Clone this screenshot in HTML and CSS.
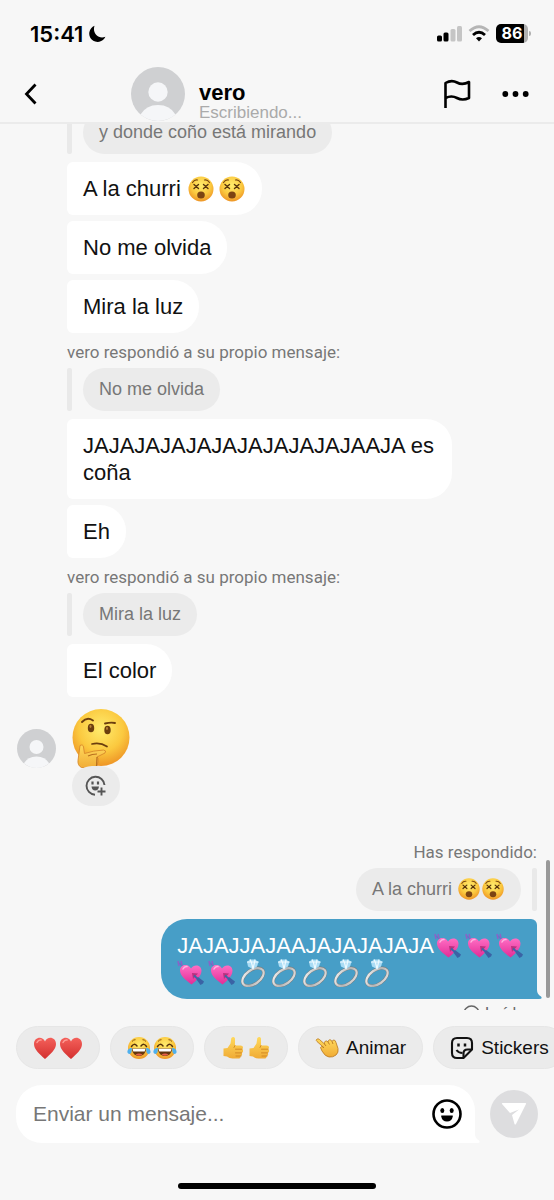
FILE: index.html
```html
<!DOCTYPE html>
<html lang="es">
<head>
<meta charset="utf-8">
<meta name="viewport" content="width=device-width, initial-scale=1">
<title>vero</title>
<link rel="stylesheet" href="styles.css">
</head>
<body>
<svg class="sprite" aria-hidden="true">
  <defs>
    <radialGradient id="face" cx=".5" cy=".35" r=".65"><stop offset="0" stop-color="#ffec6e"/><stop offset=".6" stop-color="#fbc93f"/><stop offset="1" stop-color="#ee9526"/></radialGradient>
    <linearGradient id="red" x1="0" y1="0" x2="0" y2="1"><stop offset="0" stop-color="#f4605a"/><stop offset="1" stop-color="#d3302f"/></linearGradient>
    <linearGradient id="pink" x1="0" y1="0" x2="0" y2="1"><stop offset="0" stop-color="#ff6fc4"/><stop offset="1" stop-color="#e22c97"/></linearGradient>
    <linearGradient id="skin" x1="0" y1="0" x2="0" y2="1"><stop offset="0" stop-color="#ffd95c"/><stop offset="1" stop-color="#f0ab35"/></linearGradient>
    <linearGradient id="silver" x1="0" y1="0" x2="1" y2="1"><stop offset="0" stop-color="#fafafa"/><stop offset=".5" stop-color="#b4b4b4"/><stop offset="1" stop-color="#e6e6e6"/></linearGradient>
  </defs>
  <symbol id="dizzy" viewBox="0 0 28 28">
    <circle cx="14" cy="14" r="12.500" fill="url(#face)"/>
    <path d="M5.500 7.500q2-3 5-2.500M22.500 7.500q-2-3-5-2.500" fill="none" stroke="#7d4a12" stroke-width="1.200" stroke-linecap="round"/>
    <path d="M7 9.500l4.500 4M11.500 9.500l-4.500 4M16.500 9.500l4.500 4M21 9.500l-4.500 4" stroke="#57330c" stroke-width="1.400" stroke-linecap="round"/>
    <ellipse cx="14" cy="20" rx="3.800" ry="3.500" fill="#7c4413"/>
  </symbol>
  <symbol id="cupid" viewBox="0 0 28 28">
    <path d="M2 4l7 6" stroke="#5d78c4" stroke-width="1.500"/>
    <path d="M1 2l1 5M4 2l1 4" stroke="#8a63c8" stroke-width="1.500"/>
    <path d="M14.500 25.500C8.500 21 3 16.500 3 11.500c0-6 8-7.500 11-2 3-5 10.500-3.500 10.500 2 0 5.500-5 10-10 14z" fill="url(#pink)"/>
    <path d="M6 10q1.500-3 4-2.500" stroke="#ffb4e0" stroke-width="1.500" fill="none" stroke-linecap="round"/>
    <path d="M15 14l6 .5-5 5.500z" fill="#b8327e"/>
    <path d="M17 16.500l5 4.500" stroke="#3e66a8" stroke-width="2"/>
    <path d="M19.500 20.500l1.500-2.500 6 4.500-1 2-2.500 1.500z" fill="#3a63a5"/>
  </symbol>
  <symbol id="ring" viewBox="0 0 28 28">
    <ellipse cx="14" cy="18" rx="12" ry="7" transform="rotate(-35 14 18)" fill="none" stroke="#777" stroke-width="3"/>
    <ellipse cx="14" cy="18" rx="12" ry="7" transform="rotate(-35 14 18)" fill="none" stroke="url(#silver)" stroke-width="2.200"/>
    <path d="M8 3l3-2.500h5L19.500 3 18 7.500 14 10 9 7.500z" fill="#a9dcf5"/>
    <path d="M8 3h11.500M11 .5l1.500 3L14 10l1.500-6.500L16 .5" stroke="#eefaff" stroke-width="1.200" fill="none"/>
  </symbol>
  <symbol id="heart" viewBox="0 0 24 24">
    <path d="M12 23C6.500 18 1 13.500 1 8c0-7 8.500-8.500 11-2.500C14.500-.5 23 1 23 8c0 5.500-5.500 10-11 15z" fill="url(#red)"/>
    <path d="M4 6.500q1.500-3 4-2.500" stroke="#ff9b94" stroke-width="1.500" fill="none" stroke-linecap="round"/>
  </symbol>
  <symbol id="joy" viewBox="0 0 24 24">
    <circle cx="12" cy="12" r="11" fill="url(#face)"/>
    <path d="M5 5.500q1.500-2 3.500-1.800M19 5.500q-1.500-2-3.500-1.800" stroke="#8a5512" stroke-width="1" fill="none"/>
    <path d="M4.500 10.500q2.500-4 5.500-.5M19.500 10.500q-2.500-4-5.500-.5" stroke="#57330c" stroke-width="1.500" fill="none" stroke-linecap="round"/>
    <path d="M5 12.500h14c0 10-14 10-14 0z" fill="#66360d"/>
    <path d="M5.500 12.800h13l-.8 2.700H6.300z" fill="#fff"/>
    <path d="M8.500 18.500q3.500-2 7 0-3.500 2.500-7 0z" fill="#e8604a"/>
    <path d="M5 12C2 12 0 14 .5 16.500c.5 2 3.500 2 4-.5zM19 12c3 0 5 2 4.500 4.500-.5 2-3.500 2-4-.5z" fill="#4fb0ee"/>
  </symbol>
  <symbol id="thumb" viewBox="0 0 24 24">
    <path d="M2.500 12.500l4-.5 3-4.500.8-5.500q2.500-2 3.700.5L14 9.500h5.500q2.500 0 2.500 2 0 1-1 1.500 1.500.8 1 2.500-.3 1.200-1.300 1.500.8.800.3 2-.4 1-1.500 1.200.5 1-.5 1.800-.5.500-1.500.5h-6q-3 0-5.500-2l-3.500-.5z" fill="url(#skin)"/>
    <path d="M14.500 13.200h6.500M14.500 16.900h6M15 20h5M14 9.500l-1 2" stroke="#cf8420" stroke-width=".9" fill="none" stroke-linecap="round"/>
  </symbol>
  <symbol id="poke" viewBox="0 0 24 24">
    <path d="M1.500 3.500q1.500-1.500 3 0l5 4.500q-.5-2 1-3 1.500-.5 2.500 1 .2-2 1.800-2.300 1.500 0 2.200 1.800.5-1.500 2-1.500 1.500.3 2 2.500l2 6q.8 4-2 6.500-3 2.500-7 2-4-.5-7-6l-1.500-3.500q.5-1.500 2.500-.5l1 .8-7-6.300q-1.200-1-.5-2z" fill="url(#skin)" stroke="#b9771f" stroke-width=".8"/>
    <path d="M9.500 8l1.500 2M13 6l1.500 2.500M17 5.500l1 2.500" stroke="#b9771f" stroke-width=".9" fill="none"/>
  </symbol>
  <symbol id="thinking" viewBox="0 0 60 60">
    <circle cx="31" cy="29.500" r="28.500" fill="url(#face)"/>
    <path d="M12 14q5-5.500 11-1.500M35 15.500q6-1.500 10-.5" stroke="#6b3e0e" stroke-width="1.900" fill="none" stroke-linecap="round"/>
    <ellipse cx="21" cy="20" rx="3.200" ry="4.300" fill="#6b3e0e"/><ellipse cx="37.500" cy="22" rx="3.200" ry="4.300" fill="#6b3e0e"/>
    <ellipse cx="20.500" cy="18.500" rx="1" ry="1.400" fill="#b98035"/><ellipse cx="37" cy="20.500" rx="1" ry="1.400" fill="#b98035"/>
    <path d="M22 36q8-2 15 2.500" stroke="#6b3e0e" stroke-width="1.700" fill="none" stroke-linecap="round"/>
    <path d="M10 37.500q3-1.500 3.500 1.500l1 6.500q9-3 19-3.500 3.500.5 1.500 3L27 49q1.500 1 1 3 .5 2-.5 3.500 0 3-3 4-7 2-13 0-4-2-3.500-7z" fill="url(#skin)" stroke="#d8892a" stroke-width=".9"/>
    <path d="M18 48q4-2 9-2M27 49l-.5 9" stroke="#b9701f" stroke-width="1.200" fill="none"/>
  </symbol>
  <symbol id="person" viewBox="0 0 54 54">
    <circle cx="27" cy="27" r="27" fill="#cfd0d2"/>
    <circle cx="27" cy="25" r="9.700" fill="#f5f6f8"/>
    <path d="M9.500 47.500Q15 38 27 38t17.500 9.500Q37 54 27 54T9.500 47.500z" fill="#f5f6f8"/>
  </symbol>
  <symbol id="tail" viewBox="0 0 12 14"><path d="M0 0h7v5q0 4 4 6.500Q13 14 9 14H0z" fill="currentColor"/></symbol>
</svg>

<div class="app">
  <header class="header">
    <div class="status">
      <span class="time">15:41</span>
      <svg class="moon" viewBox="0 0 18 18" aria-hidden="true"><path d="M6.500.8A8.400 8.400 0 1 0 17.400 11.800C10.500 14.500 4 8.500 6.500.8z"/></svg>
      <svg class="signal" viewBox="0 0 26 17" aria-hidden="true"><rect y="10.500" width="5" height="6" rx="1.500"/><rect x="6.500" y="7.500" width="5" height="9" rx="1.500"/><g fill="#c5c5c5"><rect x="13.500" y="4" width="5" height="12.500" rx="1.500"/><rect x="20" y="1" width="5" height="15.500" rx="1.500"/></g></svg>
      <svg class="wifi" viewBox="0 0 22 17" aria-hidden="true"><g fill="none" stroke-width="2.800"><path d="M1.500 6q9.500-8.500 19 0" stroke="#b5b5b5"/><path d="M5 10q6-5.500 12 0" stroke="#000"/></g><path d="M11 16.500l-3-3.300q3-2.500 6 0z"/></svg>
      <span class="battery"><span class="battery-level">86</span></span>
    </div>
    <div class="nav">
      <button class="icon-button back" aria-label="Atrás"><svg width="14" height="22" viewBox="0 0 14 22" fill="none" stroke="#000" stroke-width="2.800"><path d="M11.500 1.500L2.500 11l9 9.500"/></svg></button>
      <svg class="avatar-large" aria-hidden="true"><use href="#person"/></svg>
      <div class="contact"><h1 class="name">vero</h1><p class="typing">Escribiendo...</p></div>
      <button class="icon-button flag" aria-label="Denunciar"><svg width="28" height="30" viewBox="0 0 28 30" fill="none" stroke="#000" stroke-width="2.600" stroke-linejoin="round"><path d="M2.500 29V4Q8.500.5 14 3.500t12-.5v16q-6.500 3-12 0t-11.500 0"/></svg></button>
      <button class="icon-button" aria-label="Más opciones"><svg width="28" height="8" viewBox="0 0 28 8"><circle cx="3.300" cy="4" r="2.900"/><circle cx="13.500" cy="4" r="2.900"/><circle cx="23.700" cy="4" r="2.900"/></svg></button>
    </div>
  </header>

  <main class="chat">
    <section class="received">
      <div class="messages">
        <blockquote class="quote quote-cut"><p class="pill">y donde coño está mirando</p></blockquote>
        <p class="bubble">A la churri <svg class="emoji"><use href="#dizzy"/></svg><svg class="emoji"><use href="#dizzy"/></svg></p>
        <p class="bubble">No me olvida</p>
        <p class="bubble">Mira la luz</p>
        <p class="label">vero respondió a su propio mensaje:</p>
        <blockquote class="quote"><p class="pill">No me olvida</p></blockquote>
        <p class="bubble">JAJAJAJAJAJAJAJAJAJAJAAJA es coña</p>
        <p class="bubble">Eh</p>
        <p class="label">vero respondió a su propio mensaje:</p>
        <blockquote class="quote"><p class="pill">Mira la luz</p></blockquote>
        <p class="bubble">El color</p>
        <svg class="big-emoji" role="img" aria-label="Cara pensativa"><use href="#thinking"/></svg>
      </div>
      <svg class="avatar-small" aria-hidden="true"><use href="#person"/></svg>
      <button class="react" aria-label="Añadir reacción"><svg width="22" height="22" viewBox="0 0 22 22" fill="none" stroke="#555" stroke-width="1.900"><path d="M10 19.800A9 9 0 1 1 19.500 10"/><path d="M16.500 12.500v8M12.500 16.500h8"/><path d="M7.500 6.500v3M13 6.500v3" stroke-width="2.200"/><path d="M6.500 11.500h7.500q-.5 4-3.800 4t-3.700-4z" fill="#555" stroke="none"/></svg></button>
    </section>
    <section class="sent">
      <p class="label">Has respondido:</p>
      <blockquote class="quote quote-sent"><p class="pill">A la churri <svg class="emoji-small"><use href="#dizzy"/></svg><svg class="emoji-small"><use href="#dizzy"/></svg></p></blockquote>
      <p class="bubble bubble-sent">JAJAJJAJAAJAJAJAJAJA<svg class="emoji"><use href="#cupid"/></svg><svg class="emoji"><use href="#cupid"/></svg><svg class="emoji"><use href="#cupid"/></svg><br><svg class="emoji"><use href="#cupid"/></svg><svg class="emoji"><use href="#cupid"/></svg><svg class="emoji"><use href="#ring"/></svg><svg class="emoji"><use href="#ring"/></svg><svg class="emoji"><use href="#ring"/></svg><svg class="emoji"><use href="#ring"/></svg><svg class="emoji"><use href="#ring"/></svg><svg class="tail"><use href="#tail"/></svg></p>
      <p class="receipt"><svg width="17" height="17" viewBox="0 0 17 17" fill="none" stroke="#666" stroke-width="1.500"><circle cx="8.500" cy="8.500" r="7.500"/><path d="M5 8.500l2.500 2.500 4.500-5"/></svg>Leído</p>
    </section>
    <div class="scrollbar"></div>
  </main>

  <footer class="footer">
    <div class="chips">
      <button class="chip" aria-label="Corazones"><svg class="chip-icon"><use href="#heart"/></svg><svg class="chip-icon"><use href="#heart"/></svg></button>
      <button class="chip" aria-label="Risas"><svg class="chip-icon"><use href="#joy"/></svg><svg class="chip-icon"><use href="#joy"/></svg></button>
      <button class="chip" aria-label="Pulgares arriba"><svg class="chip-icon"><use href="#thumb"/></svg><svg class="chip-icon"><use href="#thumb"/></svg></button>
      <button class="chip chip-text"><svg class="chip-icon"><use href="#poke"/></svg>Animar</button>
      <button class="chip chip-text"><svg class="chip-icon" viewBox="0 0 24 24" fill="none" stroke="#111" stroke-width="2.100" stroke-linejoin="round"><path d="M13.500 22H7q-5 0-5-5V7q0-5 5-5h10q5 0 5 5v6.500z"/><path d="M13.500 22v-4.500q0-4 4-4H22"/><path d="M8.500 7.500v3M15 7.500v3" stroke-width="2.500"/><path d="M6.500 14q2 3 6 3"/></svg>Stickers</button>
    </div>
    <form class="composer">
      <div class="field">
        <input class="input" type="text" placeholder="Enviar un mensaje..." aria-label="Enviar un mensaje">
        <button class="icon-button" type="button" aria-label="Emojis"><svg width="30" height="30" viewBox="0 0 30 30"><circle cx="15" cy="15" r="13.500" fill="none" stroke="#000" stroke-width="2.600"/><ellipse cx="10.300" cy="11.500" rx="2" ry="2.600"/><ellipse cx="19.700" cy="11.500" rx="2" ry="2.600"/><path d="M9.500 16.500h11q.5 0 .3 1-1 5-5.800 5t-5.800-5q-.2-1 .3-1z"/></svg></button>
        <svg class="tail"><use href="#tail"/></svg>
      </div>
      <button class="send" type="button" aria-label="Enviar"><svg width="26" height="24" viewBox="0 0 26 24"><path d="M1.500 1h23q1 0 .5 1L15 22q-.8 1.200-1.500 0L11 13l7-5.500-9 3.500-8-9q-.5-1 .5-1z" fill="#fff"/></svg></button>
    </form>
    <div class="home"></div>
  </footer>
</div>
</body>
</html>
```

FILE: styles.css
```css
* { box-sizing: border-box; }
body, h1, p, blockquote { margin: 0; }
body {
  background: #f7f7f7;
  color: #111;
  font-family: "Liberation Sans", Arial, sans-serif;
}
button, input { font: inherit; color: inherit; border: 0; background: none; padding: 0; }
svg { flex: none; }
.sprite { position: absolute; width: 0; height: 0; }

.app { height: 100vh; display: flex; flex-direction: column; }

.header { border-bottom: 2px solid #ebebeb; }
.status { height: 64px; padding: 3px 26px 0 30px; display: flex; align-items: center; }
.time { font: 600 22px/26px Inter, sans-serif; color: #000; }
.moon { width: 18px; height: 18px; margin-left: 5px; }
.signal { width: 26px; height: 17px; margin-left: auto; }
.wifi { width: 22px; height: 17px; margin: 0 6px 0 5px; }
.battery {
  position: relative;
  width: 32px;
  height: 19px;
  border-radius: 5px;
  background: linear-gradient(90deg, #000 86%, #b0b0b0 86%);
  color: #fff;
  text-align: center;
}
.battery::after {
  content: "";
  position: absolute;
  left: 33px;
  top: 7px;
  width: 2px;
  height: 5px;
  border-radius: 0 2px 2px 0;
  background: #b0b0b0;
}
.battery-level { display: block; font: 700 16px/19px Inter, sans-serif; }

.nav { height: 58px; padding: 2px 24px 0; display: flex; align-items: center; }
.icon-button { display: flex; align-items: center; cursor: pointer; }
.back { width: 107px; height: 44px; }
.avatar-large { width: 54px; height: 54px; }
.contact { align-self: flex-end; margin-left: 14px; }
.name { font-size: 22px; line-height: 22px; color: #000; }
.typing { font-size: 17px; line-height: 18px; color: #aaa; }
.flag { margin: 0 31px 0 auto; }

.chat {
  position: relative;
  flex: 1;
  min-height: 0;
  overflow: hidden;
  padding: 0 17px;
}
.received { display: grid; grid-template-columns: 39px 1fr; column-gap: 11px; }
.messages { grid-column: 2; grid-row: 1; display: flex; flex-direction: column; align-items: flex-start; }
.avatar-small { grid-column: 1; grid-row: 1; align-self: end; width: 39px; height: 39px; }

.bubble {
  max-width: 82%;
  margin-bottom: 6px;
  padding: 13px 16px;
  border-radius: 6px 26px 26px 6px;
  background: #fff;
  font-size: 22px;
  line-height: 27px;
}
.emoji { width: 28px; height: 28px; margin: -3px 3px -3px 0; vertical-align: -4px; }
.emoji:last-child { margin-right: 0; }
.emoji-small { width: 24px; height: 24px; margin: -3px 0; vertical-align: -3px; }

.label { margin: 3px 0 6px; font-family: Roboto, sans-serif; font-size: 17px; line-height: 20px; color: #777; }
.quote { display: flex; gap: 11px; margin-bottom: 8px; }
.quote::before { content: ""; width: 5px; border-radius: 2px; background: #e9e9e9; }
.pill {
  padding: 10px 16px;
  border-radius: 22px;
  background: #ebebeb;
  color: #777;
  font-size: 18px;
  line-height: 23px;
}
.quote-cut { margin-top: -13px; }
.big-emoji { width: 60px; height: 60px; margin: 5px 0 0 3px; }
.react {
  grid-column: 2;
  position: relative;
  width: 48px;
  height: 40px;
  margin: -2px 0 0 5px;
  display: grid;
  place-items: center;
  border-radius: 20px;
  background: #ebebeb;
}

.sent { margin-top: 33px; display: flex; flex-direction: column; align-items: flex-end; }
.quote-sent { flex-direction: row-reverse; }
.bubble-sent {
  position: relative;
  max-width: 90%;
  padding-right: 10px;
  border-radius: 26px 6px 0 26px;
  background: #479ec7;
  color: #fff;
}
.tail { position: absolute; right: -5px; bottom: 0; width: 12px; height: 14px; }
.bubble-sent .tail { color: #479ec7; }
.receipt { display: flex; align-items: center; gap: 5px; margin-right: 12px; font-size: 16px; line-height: 16px; color: #666; }
.scrollbar { position: absolute; right: 4px; bottom: 12px; width: 4px; height: 138px; border-radius: 2px; background: #999; }

.footer { padding: 16px 16px 11px; }
.chips { display: flex; gap: 10px; margin-right: -16px; overflow: hidden; }
.chip {
  flex: none;
  height: 43px;
  padding: 0 16px;
  display: flex;
  align-items: center;
  gap: 2px;
  border: 1px solid #e6e6e6;
  border-radius: 22px;
  background: #ebebeb;
  font-size: 19px;
}
.chip-text { gap: 7px; }
.chip-icon { width: 24px; height: 24px; }
.composer { display: flex; align-items: center; gap: 15px; margin-top: 16px; }
.field {
  position: relative;
  flex: 1;
  min-width: 0;
  height: 58px;
  padding: 0 13px 0 17px;
  display: flex;
  align-items: center;
  border-radius: 26px 26px 0 26px;
  background: #fff;
}
.field .tail { color: #fff; }
.input { flex: 1; min-width: 0; height: 100%; font-size: 21px; outline: 0; }
.input::placeholder { color: #777; opacity: 1; }
.send { width: 48px; height: 48px; flex: none; display: grid; place-items: center; border-radius: 50%; background: #dddddf; }
.home { width: 198px; height: 6px; margin: 40px auto 0; border-radius: 3px; background: #000; }
```
